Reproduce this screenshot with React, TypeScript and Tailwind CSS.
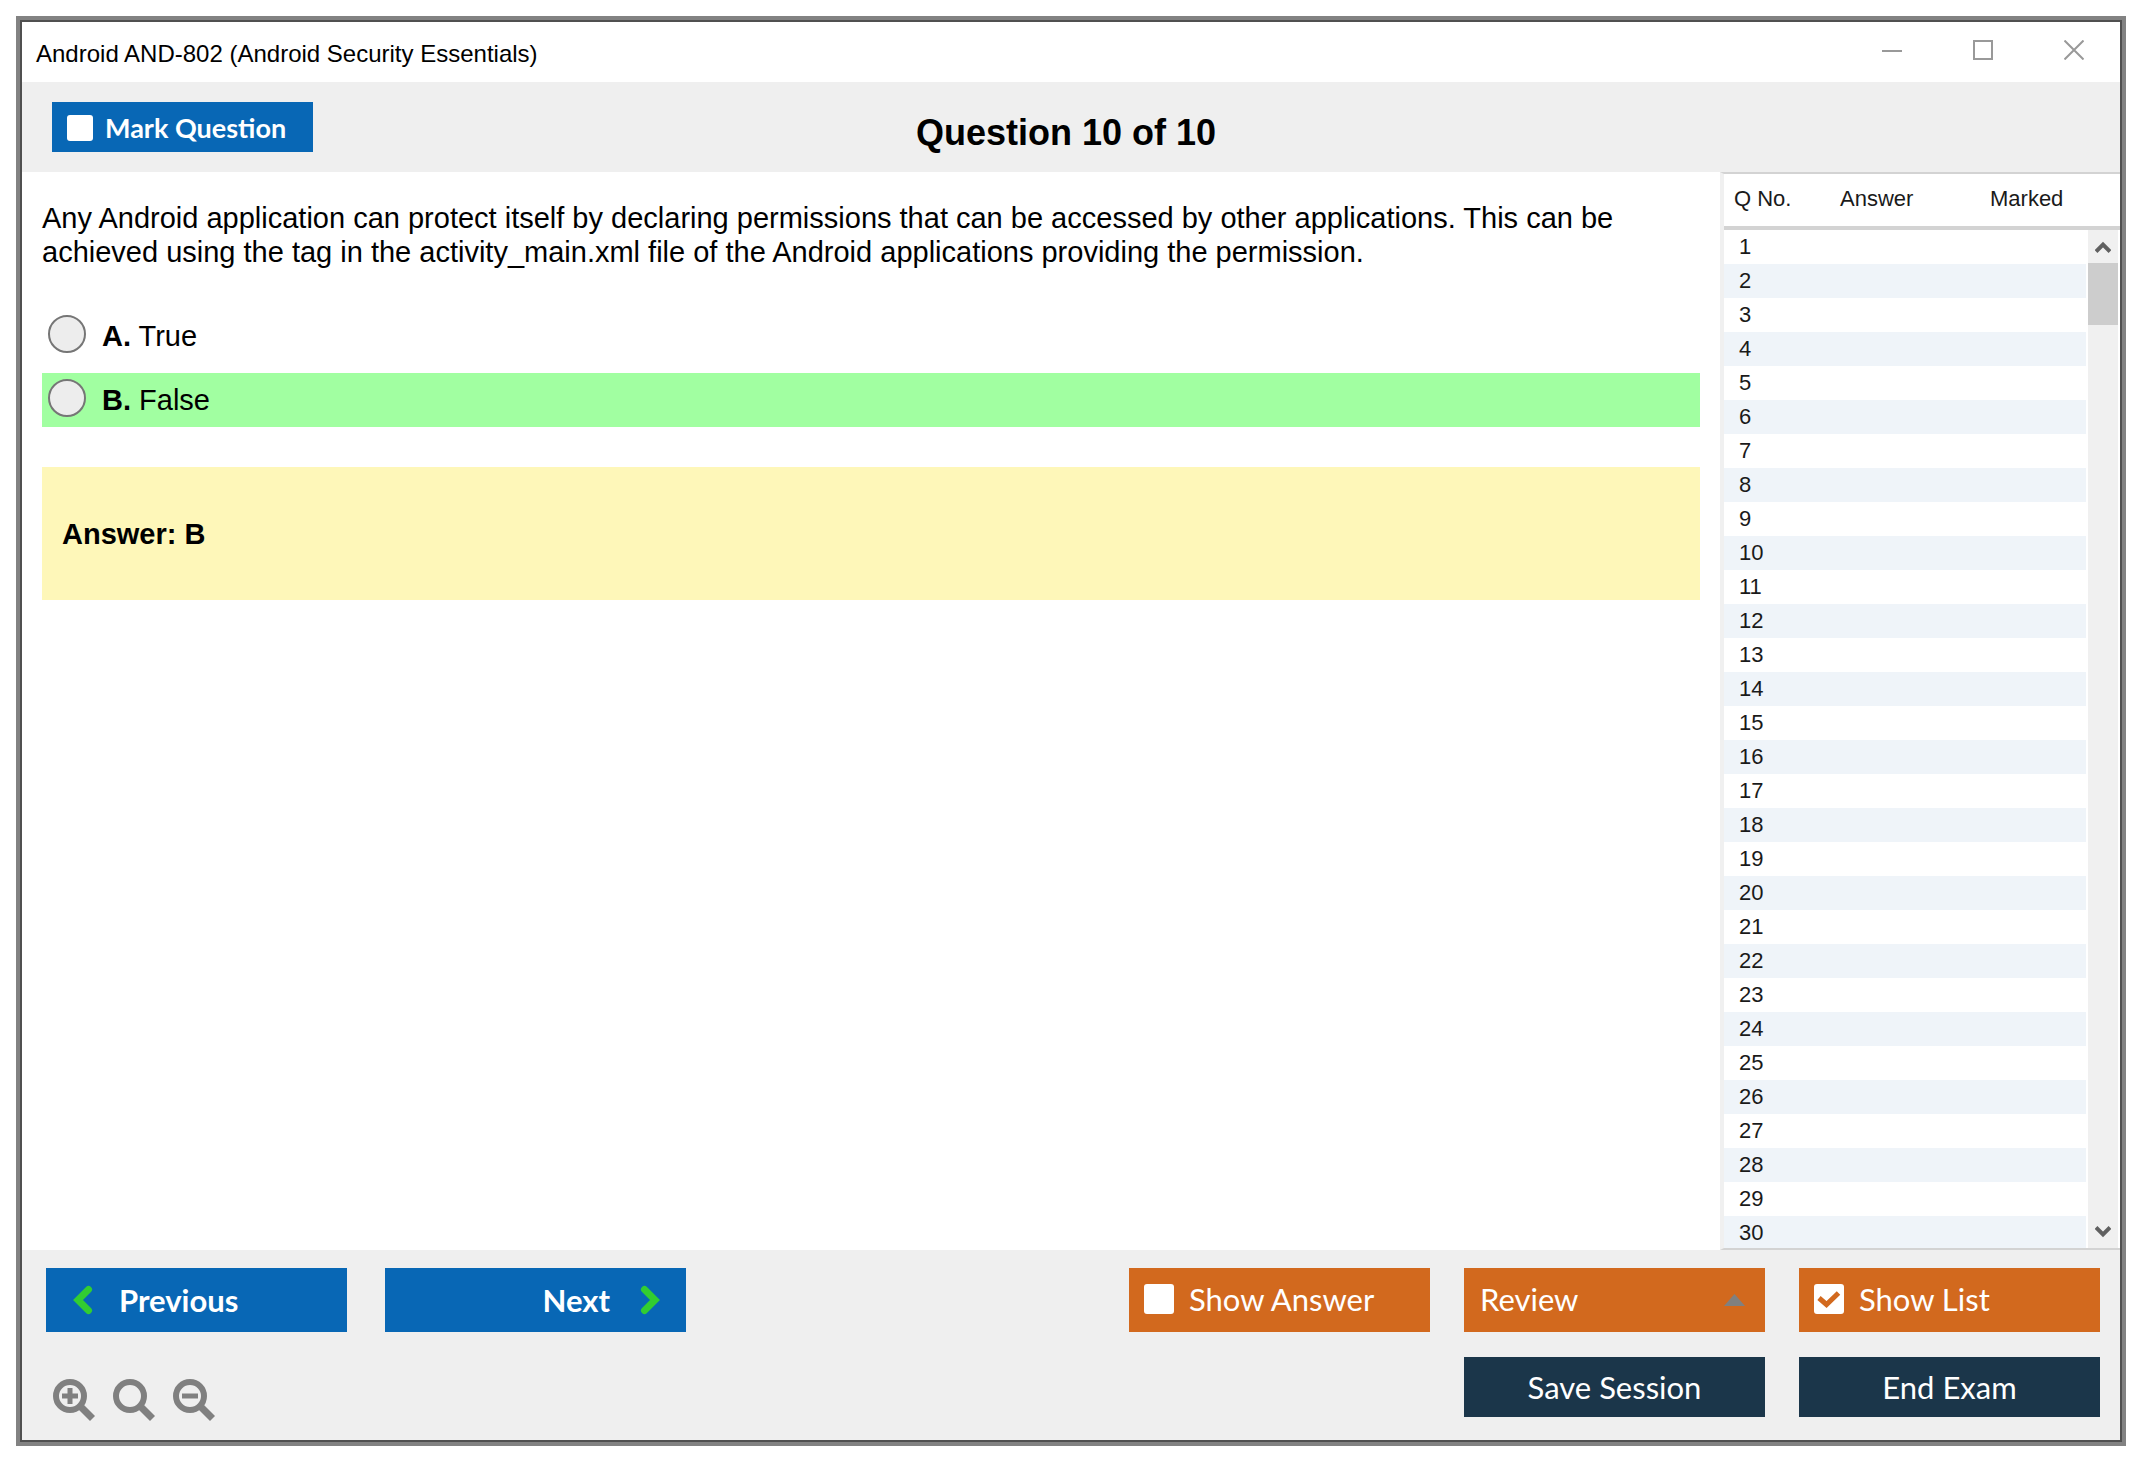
import React, { useState } from 'react';
import clsx from 'clsx';

const QUESTION_COUNT = 30;

const OPTIONS = [
  { key: 'A', text: 'True' },
  { key: 'B', text: 'False' },
];

const CORRECT = 'B';

const TitleBar = () => (
  <div className="flex h-[60px] shrink-0 items-center justify-between bg-white pl-3.5 pr-9">
    <h1 className="pt-1 text-[24px] leading-[26px] text-black">Android AND-802 (Android Security Essentials)</h1>
    <div className="flex items-center gap-[71px] pb-1 text-[#999999]">
      <button aria-label="Minimize">
        <svg className="h-5 w-5" viewBox="0 0 20 20" fill="none" stroke="currentColor" strokeWidth={2}>
          <path d="M0 11h20" />
        </svg>
      </button>
      <button aria-label="Maximize">
        <svg className="h-5 w-5" viewBox="0 0 20 20" fill="none" stroke="currentColor" strokeWidth={2}>
          <path d="M1 1h18v18H1z" />
        </svg>
      </button>
      <button aria-label="Close">
        <svg className="h-5 w-5" viewBox="0 0 20 20" fill="none" stroke="currentColor" strokeWidth={2}>
          <path d="M0.5 0.5l19 19M19.5 0.5l-19 19" />
        </svg>
      </button>
    </div>
  </div>
);

type CheckProps = {
  label: string;
  checked: boolean;
  onChange: (value: boolean) => void;
  className: string;
  boxClassName: string;
};

const CheckButton = ({ label, checked, onChange, className, boxClassName }: CheckProps) => (
  <label className={clsx('flex cursor-pointer items-center text-white', className)}>
    <span className={clsx('grid shrink-0', boxClassName)}>
      <input
        type="checkbox"
        checked={checked}
        onChange={(e) => onChange(e.target.checked)}
        className="col-start-1 row-start-1 h-full w-full appearance-none rounded-[3px] bg-white"
      />
      {checked && (
        <svg
          className="pointer-events-none col-start-1 row-start-1 h-full w-full text-[#d2691e]"
          viewBox="0 0 30 30"
          fill="none"
          stroke="currentColor"
          strokeWidth={5}
        >
          <path d="M5 14l7.5 6.5L24.5 9" />
        </svg>
      )}
    </span>
    {label}
  </label>
);

const ZoomIcon = ({ sign }: { sign?: string }) => (
  <svg className="h-[42px] w-[42px]" viewBox="0 0 42 42" fill="none" stroke="currentColor">
    <circle cx="17" cy="17" r="14" strokeWidth={6} />
    <path d="M27.5 27.5L39.5 39.5" strokeWidth={7} />
    {sign && <path d={sign} strokeWidth={5} />}
  </svg>
);

const QuestionList = () => (
  <aside className="flex w-[400px] shrink-0 overflow-hidden border-b-2 border-l-4 border-t-2 border-[#d3d3d3] border-l-[#f0f0f0] bg-white text-[22px] leading-[26px] text-[#1a1a1a]">
    <div className="min-w-0 flex-1 overflow-hidden">
      <table className="w-full table-fixed border-separate border-spacing-0">
        <thead>
          <tr className="h-14">
            <th className="w-[116px] border-b-4 border-[#d3d3d3] pb-0.5 pl-2.5 text-left font-normal">Q No.</th>
            <th className="w-[150px] border-b-4 border-[#d3d3d3] pb-0.5 text-left font-normal">Answer</th>
            <th className="border-b-4 border-[#d3d3d3] pb-0.5 text-left font-normal">Marked</th>
          </tr>
        </thead>
        <tbody>
          {Array.from({ length: QUESTION_COUNT }, (_, i) => (
            <tr key={i} className="h-[34px] even:bg-[#eff4f9]">
              <td className="pl-[15px]">{i + 1}</td>
              <td />
              <td />
            </tr>
          ))}
        </tbody>
      </table>
    </div>

    {/* Scrollbar */}
    <div className="flex w-[34px] flex-col">
      <div className="h-14 shrink-0 border-b-4 border-[#d3d3d3]" />
      <div className="mx-0.5 flex flex-1 flex-col bg-[#f0f0f0] text-[#606060]">
        <button aria-label="Scroll up" className="flex h-[33px] items-center justify-center">
          <svg className="h-3 w-4" viewBox="0 0 16 12" fill="none" stroke="currentColor" strokeWidth={4}>
            <path d="M1 10.5L8 3.5l7 7" />
          </svg>
        </button>
        <div className="h-[62px] bg-[#cdcdcd]" />
        <button aria-label="Scroll down" className="mt-auto flex h-[33px] items-center justify-center">
          <svg className="h-3 w-4" viewBox="0 0 16 12" fill="none" stroke="currentColor" strokeWidth={4}>
            <path d="M1 1.5L8 8.5l7-7" />
          </svg>
        </button>
      </div>
    </div>
  </aside>
);

export default function App() {
  const [marked, setMarked] = useState(false);
  const [showAnswer, setShowAnswer] = useState(false);
  const [showList, setShowList] = useState(true);
  const [selected, setSelected] = useState('');

  return (
    <div className="flex h-screen bg-white pb-6 pl-4 pr-6 pt-4 font-['Liberation_Sans',Arial,sans-serif] text-black">
      <div className="flex flex-1 border-4 border-[#828282]">
        <div className="flex min-w-0 flex-1 flex-col border-2 border-[#505050] bg-white">
          <TitleBar />

          {/* Question header */}
          <header className="grid h-[90px] shrink-0 grid-cols-[1fr_auto_1fr] items-center bg-[#efefef] pl-[30px] pr-10">
            <CheckButton
              label="Mark Question"
              checked={marked}
              onChange={setMarked}
              className="h-[50px] w-[261px] gap-3 bg-[#0867b5] pl-[15px] pt-0.5 font-['Lato',sans-serif] text-[27px] font-bold"
              boxClassName="h-[26px] w-[26px]"
            />
            <h2 className="pt-3 text-[36px] font-bold leading-10">Question 10 of 10</h2>
          </header>

          <div className="flex min-h-0 flex-1">
            {/* Question */}
            <main className="min-w-0 flex-1 px-5 pt-[29px] text-[29px] leading-[34px]">
              <p className="mb-10">
                Any Android application can protect itself by declaring permissions that can be accessed by other
                applications. This can be achieved using the tag in the activity_main.xml file of the Android
                applications providing the permission.
              </p>
              <div className="flex flex-col gap-2.5">
                {OPTIONS.map((option) => (
                  <label
                    key={option.key}
                    className={clsx(
                      'flex h-[54px] items-start gap-4 pl-1.5 pt-1.5',
                      option.key === CORRECT && 'bg-[#a1ffa1]',
                    )}
                  >
                    <input
                      type="radio"
                      name="answer"
                      value={option.key}
                      checked={selected === option.key}
                      onChange={() => setSelected(option.key)}
                      className="h-[38px] w-[38px] shrink-0 appearance-none rounded-full border-2 border-[#767676] bg-[#ededed] checked:bg-[#767676]"
                    />
                    <span className="pt-1">
                      <b>{option.key}.</b> {option.text}
                    </span>
                  </label>
                ))}
              </div>
              <div className="mt-10 bg-[#fef7b9] px-5 pb-[49px] pt-[50px] font-bold">Answer: {CORRECT}</div>
            </main>

            {showList && <QuestionList />}
          </div>

          {/* Footer */}
          <footer className="flex shrink-0 items-start justify-between bg-[#efefef] pb-[19px] pl-6 pr-5 pt-[18px] font-['Lato',sans-serif] text-[31px]">
            <div className="flex flex-col gap-[47px]">
              <div className="flex gap-[38px] font-bold text-white">
                <button className="flex h-16 w-[301px] items-center gap-[26px] bg-[#0867b5] pl-[27px]">
                  <svg
                    className="h-[30px] w-5 text-[#32cd32]"
                    viewBox="0 0 20 30"
                    fill="none"
                    stroke="currentColor"
                    strokeWidth={7}
                    strokeLinecap="round"
                  >
                    <path d="M15.5 4.5L5 15l10.5 10.5" />
                  </svg>
                  Previous
                </button>
                <button className="flex h-16 w-[301px] items-center justify-end gap-[30px] bg-[#0867b5] pr-[26px]">
                  Next
                  <svg
                    className="h-[30px] w-5 text-[#32cd32]"
                    viewBox="0 0 20 30"
                    fill="none"
                    stroke="currentColor"
                    strokeWidth={7}
                    strokeLinecap="round"
                  >
                    <path d="M4.5 4.5L15 15 4.5 25.5" />
                  </svg>
                </button>
              </div>
              <div className="flex gap-[18px] pl-[7px] text-[#808080]">
                <button aria-label="Zoom in">
                  <ZoomIcon sign="M9 17h16M17 9v16" />
                </button>
                <button aria-label="Reset zoom">
                  <ZoomIcon />
                </button>
                <button aria-label="Zoom out">
                  <ZoomIcon sign="M9 17h16" />
                </button>
              </div>
            </div>

            <div className="grid grid-cols-[301px_301px_301px] gap-x-[34px] gap-y-[25px] text-white">
              <CheckButton
                label="Show Answer"
                checked={showAnswer}
                onChange={setShowAnswer}
                className="h-16 gap-[15px] bg-[#d2691e] pb-0.5 pl-[15px]"
                boxClassName="h-[30px] w-[30px]"
              />
              <div className="grid">
                <select
                  aria-label="Review"
                  className="col-start-1 row-start-1 h-16 w-full appearance-none bg-[#d2691e] pb-0.5 pl-4 text-white"
                >
                  <option>Review</option>
                </select>
                <svg
                  className="pointer-events-none col-start-1 row-start-1 mr-5 h-3 w-[21px] self-center justify-self-end text-[#808080]"
                  viewBox="0 0 21 12"
                  fill="currentColor"
                >
                  <path d="M10.5 0L21 12H0z" />
                </svg>
              </div>
              <CheckButton
                label="Show List"
                checked={showList}
                onChange={setShowList}
                className="h-16 gap-[15px] bg-[#d2691e] pb-0.5 pl-[15px]"
                boxClassName="h-[30px] w-[30px]"
              />
              <button className="col-start-2 h-[60px] bg-[#1b364a]">Save Session</button>
              <button className="h-[60px] bg-[#1b364a]">End Exam</button>
            </div>
          </footer>
        </div>
      </div>
    </div>
  );
}
